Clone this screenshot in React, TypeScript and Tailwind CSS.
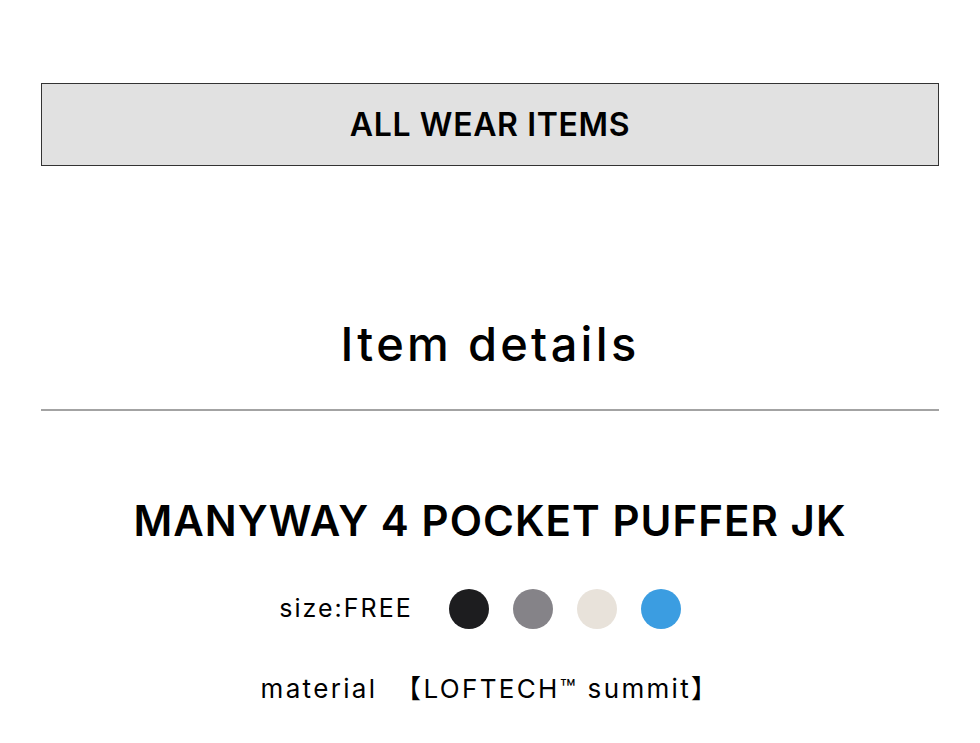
export default function App() {
  const colors = ['bg-[#1d1d1f]', 'bg-[#858388]', 'bg-[#e8e2da]', 'bg-[#3b9de1]'];
  return (
    <div className="min-h-screen bg-white px-[41px] pt-[83px] text-black" style={{ fontFamily: 'Inter, "Noto Sans", "Noto Sans CJK JP", sans-serif' }}>
      <div className="flex h-[83px] items-center justify-center border border-[#333] bg-[#e1e1e1]">
        <span className="text-[32px] font-semibold tracking-[0.02em]">ALL WEAR ITEMS</span>
      </div>

      <h2 className="mt-[148px] text-center text-[47px] leading-[60px] font-medium tracking-[0.07em]">Item details</h2>
      <hr className="mt-[35px] border-t-2 border-[#a3a3a3]" />

      <h1 className="mt-[84px] text-center text-[42px] leading-[52px] font-semibold tracking-[0.025em]">
        MANYWAY 4 POCKET PUFFER JK
      </h1>

      <div className="mt-[42px] flex items-center justify-center gap-[24px] pr-[20px]">
        <span className="mr-[12px] text-[25px] tracking-[0.08em]">size:FREE</span>
        {colors.map((c) => (
          <span key={c} className={`h-[40px] w-[40px] rounded-full ${c}`} />
        ))}
      </div>

      <p className="mt-[40px] text-center text-[26px] tracking-[0.09em]">
        material <span className="ml-[8px]">【LOFTECH™ summit】</span>
      </p>
    </div>
  );
}
